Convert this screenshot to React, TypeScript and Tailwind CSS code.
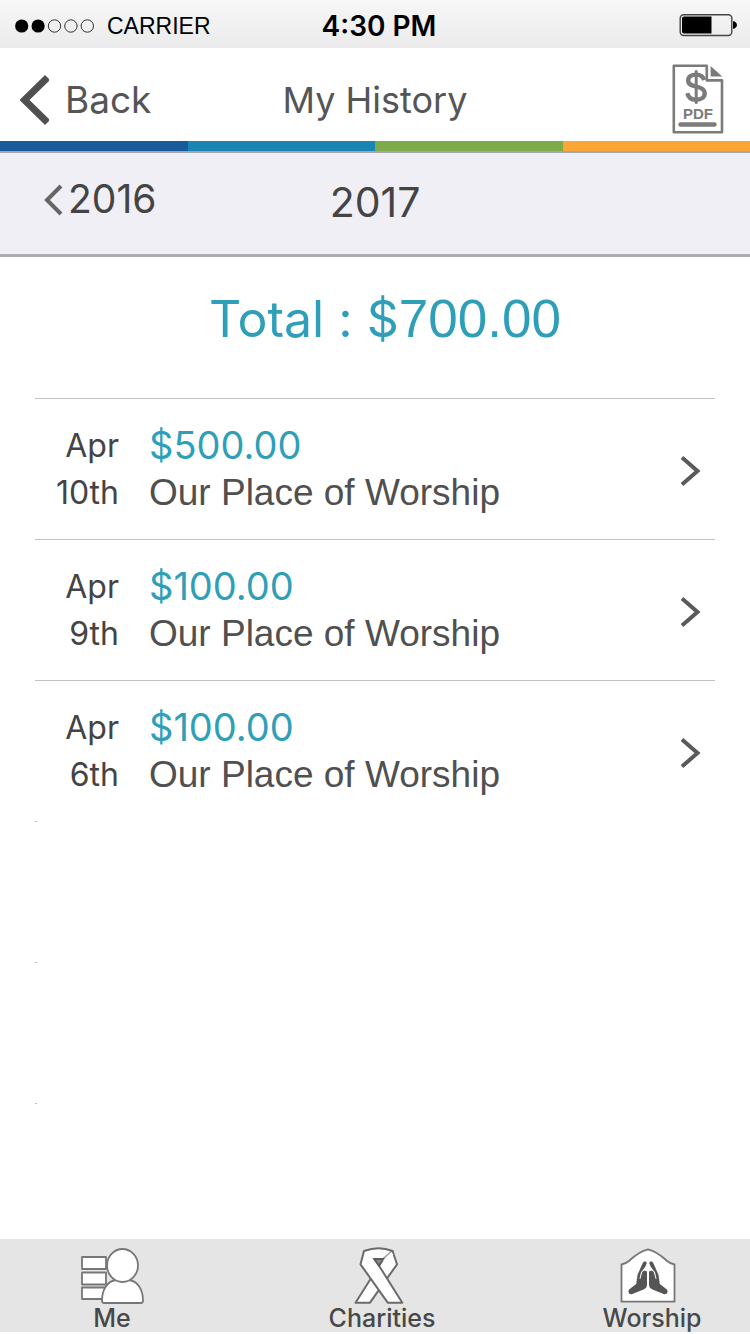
type Gift = {
	id: number;
	month: string;
	day: string;
	amount: string;
	recipient: string;
};

const gifts: Gift[] = [
	{
		id: 1,
		month: "Apr",
		day: "10th",
		amount: "$500.00",
		recipient: "Our Place of Worship",
	},
	{
		id: 2,
		month: "Apr",
		day: "9th",
		amount: "$100.00",
		recipient: "Our Place of Worship",
	},
	{
		id: 3,
		month: "Apr",
		day: "6th",
		amount: "$100.00",
		recipient: "Our Place of Worship",
	},
];

const emptyRows = [4, 5, 6];

function StatusBar() {
	return (
		<div className="grid h-12 grid-cols-[1fr_auto_1fr] items-center bg-linear-to-b from-[#f7f7f7] to-[#ebebeb] px-3 text-black">
			<div className="flex items-center gap-3 pt-1 pl-[3px]">
				<svg width="80" height="14" viewBox="0 0 80 14" aria-hidden="true">
					<circle cx="6.7" cy="7" r="6.6" />
					<circle cx="23.1" cy="7" r="6.6" />
					<g fill="none" stroke="#333" strokeWidth="1">
						<circle cx="39.5" cy="7" r="6.2" />
						<circle cx="55.9" cy="7" r="6.2" />
						<circle cx="72.3" cy="7" r="6.2" />
					</g>
				</svg>
				<span className="font-['Liberation_Sans',sans-serif] text-[23px]">
					CARRIER
				</span>
			</div>
			<span className="pt-1 pl-2 text-center font-semibold text-[28px]">
				4:30 PM
			</span>
			<svg
				className="mt-0.5 justify-self-end"
				width="59"
				height="24"
				viewBox="0 0 59 24"
				aria-hidden="true"
			>
				<rect
					x="1.2"
					y="1.7"
					width="51.6"
					height="20.8"
					rx="3.5"
					fill="none"
					stroke="#444"
					strokeWidth="1.4"
				/>
				<path d="M5 3.6h27.5v17H5a2 2 0 0 1-2-2v-13a2 2 0 0 1 2-2z" />
				<path d="M54 8.2h1.2q2.8 1 2.8 3.8t-2.8 3.8H54z" />
			</svg>
		</div>
	);
}

function PdfIcon() {
	return (
		<svg width="52" height="70" viewBox="0 0 52 70" aria-hidden="true">
			<path
				d="M34.8 1.8H1.8v66.4h48.2V16.4H34.8z"
				fill="#fff"
				stroke="#7b7b7b"
				strokeWidth="2.6"
				strokeLinejoin="round"
			/>
			<path d="M38.6 2v10.5h11.6z" fill="#7b7b7b" />
			<g fill="none" stroke="#7b7b7b" strokeLinecap="round">
				<path
					d="M32.2 16C31 12 28 10.6 24.2 10.6c-4.7 0-8 2.2-8 5.8 0 4.3 4 5.3 8.3 6.3 4.7 1.1 8.2 2.5 8.2 6.5 0 4.2-3.7 6.6-8.5 6.6-4.7 0-8-2-8.8-6.6"
					strokeWidth="4.4"
					strokeLinecap="butt"
				/>
				<path d="M24.2 7.5v31" strokeWidth="3" />
				<path d="M8.5 60.5h34" strokeWidth="4.4" />
			</g>
			<text
				x="26"
				y="55"
				textAnchor="middle"
				fontFamily="Liberation Sans, sans-serif"
				fontSize="15"
				fontWeight="bold"
				fill="#7b7b7b"
			>
				PDF
			</text>
		</svg>
	);
}

function Header() {
	return (
		<header className="grid h-[93px] grid-cols-[1fr_auto_1fr] items-center px-5 text-[#555]">
			<button
				type="button"
				className="flex items-center gap-4 justify-self-start pt-2.5 text-[37px]"
			>
				<svg width="29" height="50" viewBox="0 0 29 50" aria-hidden="true">
					<path
						d="M27.5 2.5 4.5 25l23 22.5"
						fill="none"
						stroke="#505050"
						strokeWidth="7"
					/>
				</svg>
				Back
			</button>
			<h1 className="pt-2.5 text-[36px]">My History</h1>
			<button
				type="button"
				aria-label="Download PDF statement"
				className="mt-2 mr-1.5 justify-self-end"
			>
				<PdfIcon />
			</button>
		</header>
	);
}

function YearNav() {
	return (
		<nav className="grid h-26 grid-cols-[1fr_auto_1fr] items-center border-[#acacac] border-b-3 bg-[#f0eff5] pb-0.5 text-[#444]">
			<button
				type="button"
				className="ml-11 flex items-center gap-1 justify-self-start pb-1.5 text-[39px]"
			>
				<svg width="20" height="32" viewBox="0 0 20 32" aria-hidden="true">
					<path
						d="M17 2 3 16l14 14"
						fill="none"
						stroke="#666"
						strokeWidth="4"
					/>
				</svg>
				2016
			</button>
			<h2 className="text-[41px]">2017</h2>
		</nav>
	);
}

function GiftRow({ gift }: { gift: Gift }) {
	return (
		<li className="border-[#c2c2c4] border-t">
			<button
				type="button"
				className="flex h-35 w-full items-center pr-3.5 text-left"
			>
				<span className="w-[84px] text-right text-[#444] text-[32px] leading-[47px]">
					{gift.month}
					<br />
					{gift.day}
				</span>
				<span className="ml-[30px] flex-1 leading-[47px]">
					<span className="block text-[#2f9fb9] text-[38px]">
						{gift.amount}
					</span>
					<span className="block font-['Liberation_Sans',sans-serif] text-[#505050] text-[37px]">
						{gift.recipient}
					</span>
				</span>
				<svg
					className="mt-1"
					width="21"
					height="32"
					viewBox="0 0 21 32"
					aria-hidden="true"
				>
					<path
						d="M2 2.5 17.5 16 2 29.5"
						fill="none"
						stroke="#5a5a5a"
						strokeWidth="4"
					/>
				</svg>
			</button>
		</li>
	);
}

function MeIcon() {
	return (
		<svg width="64" height="58" viewBox="0 0 64 58" aria-hidden="true">
			<g fill="#fff" stroke="#777" strokeWidth="1.8" strokeLinejoin="round">
				<rect x="2" y="10" width="24" height="12" />
				<rect x="2" y="25.5" width="24" height="12" />
				<rect x="2" y="40.5" width="24" height="11.5" />
				<path d="M24 56c-1.500 0-2-1-2-2.500C22 42 28 34 36 33h13c8 1 14 9 14 20.500 0 1.500-.5 2.500-2 2.500z" />
				<ellipse cx="42.5" cy="18.5" rx="15.5" ry="16.5" />
			</g>
		</svg>
	);
}

function RibbonIcon() {
	return (
		<svg
			className="mr-1.5"
			width="50"
			height="58"
			viewBox="0 0 50 58"
			aria-hidden="true"
		>
			<g fill="#fff" stroke="#6b6b6b" strokeWidth="2" strokeLinejoin="round">
				<path d="M38.5 4 43 17.300 16 55.700H1.500L25 18.700l4.300-6.700z" />
				<path d="M10 4 6.500 17.300l27.200 38.400h14.600L25 18.700 20.300 12h9L38.500 4Q25-1.400 10 4z" />
			</g>
			{/* Fold at the top of the loop */}
			<path d="M28.500 13 37.500 4.800l1.500 3-9.500 8z" fill="#fff" />
			<path d="m29.500 12 7-7.500" stroke="#aaa" strokeWidth="1" />
			<path
				d="M20.300 12h9L25 18.700z"
				fill="#8a8a8a"
				stroke="#5c5c5c"
				strokeWidth="1.8"
			/>
		</svg>
	);
}

function WorshipIcon() {
	return (
		<svg
			className="mr-2"
			width="56"
			height="58"
			viewBox="0 0 56 58"
			aria-hidden="true"
		>
			<path
				d="M1.500 54.700V17.500q4-.500 8-4Q19 4.500 28 2.300 37 4.500 46.500 13.500q4 3.500 8 4v37.200z"
				fill="#fff"
				stroke="#777"
				strokeWidth="1.8"
			/>
			<g fill="#555">
				<path d="M26.800 16c-1-2-3.300-1.800-4.200.2L17.500 28l-1.300 9-6.500 5c-2.700 2.200-.7 6.200 2.600 5l11.200-4.500c2.600-1.200 3.500-2.700 3.500-5V24.500c-2-1.500-4.500-.8-5 1.500l-1.700 6-.8-.2 1.500-6.500 4.300-5.500z" />
				<path d="M29.200 16c1-2 3.300-1.800 4.200.2L38.500 28l1.300 9 6.500 5c2.700 2.200.7 6.200-2.600 5l-11.200-4.500c-2.600-1.200-3.500-2.700-3.500-5V24.500c2-1.500 4.500-.8 5 1.500l1.700 6 .8-.2-1.500-6.500-4.300-5.500z" />
			</g>
		</svg>
	);
}

function TabBar() {
	return (
		<nav className="mb-0.5 flex h-[93px] items-end justify-between bg-[#e5e5e5] pr-11 pl-[58px] font-medium text-[#484848] text-[25px] leading-[27px]">
			<a href="#me" className="flex w-27 flex-col items-center">
				<MeIcon />
				Me
			</a>
			<a href="#charities" className="flex w-27 flex-col items-center">
				<RibbonIcon />
				Charities
			</a>
			<a href="#worship" className="flex w-27 flex-col items-center">
				<WorshipIcon />
				Worship
			</a>
		</nav>
	);
}

export default function App() {
	return (
		<div className="flex min-h-screen flex-col bg-white font-['Inter',sans-serif]">
			<StatusBar />
			<Header />

			{/* Brand stripe */}
			<div className="grid h-3 grid-cols-4 border-[#a5a5ad] border-b-2">
				<div className="bg-[#195a98]" />
				<div className="bg-[#1985b3]" />
				<div className="bg-[#7eab49]" />
				<div className="bg-[#faa634]" />
			</div>

			<YearNav />

			<main className="flex-1 px-[35px]">
				<p className="flex h-[142px] items-center justify-center gap-3.5 pb-[18px] pl-5 text-[#2f9fb9] text-[50px]">
					<span>Total :</span>
					<span>
						$
						<span className="font-['Liberation_Sans',sans-serif] text-[53px]">
							700.00
						</span>
					</span>
				</p>
				<ul className="-mt-px">
					{gifts.map((gift) => (
						<GiftRow key={gift.id} gift={gift} />
					))}
					{/* Unused slots keep only the start of their divider */}
					{emptyRows.map((row) => (
						<li key={row} className="h-[141px] last:h-auto">
							<div className="h-px w-0.5 bg-[#c2c2c4]" />
						</li>
					))}
				</ul>
			</main>

			<TabBar />
		</div>
	);
}
